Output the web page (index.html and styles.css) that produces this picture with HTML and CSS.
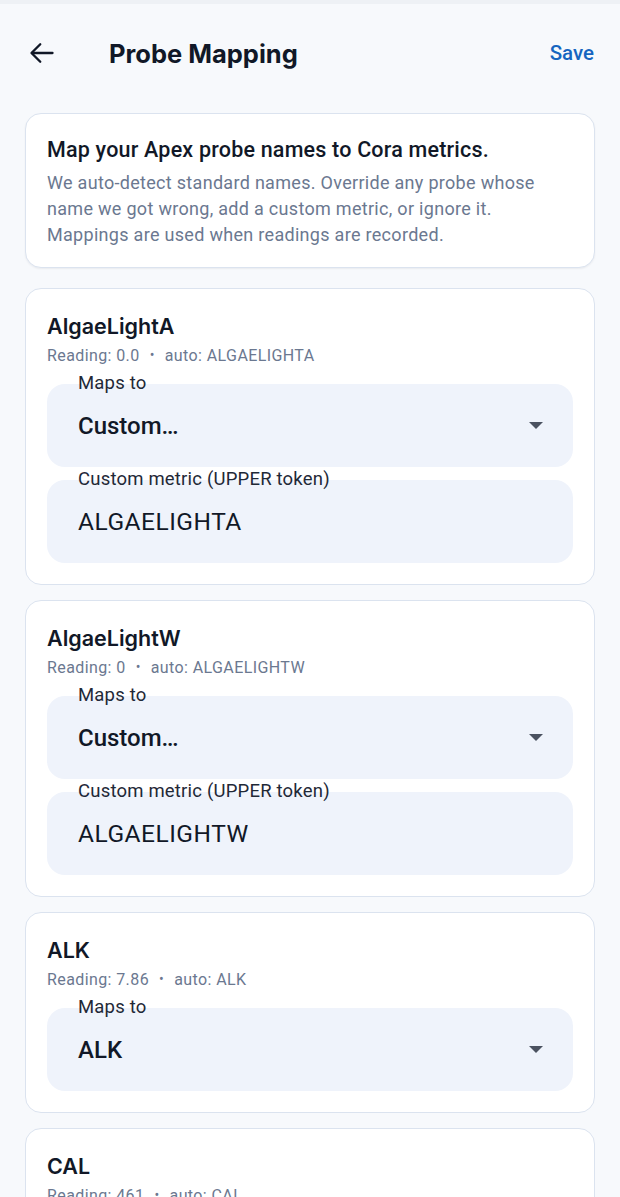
FILE: index.html
```html
<!DOCTYPE html>
<html lang="en">
<head>
<meta charset="utf-8">
<title>Probe Mapping</title>
<link rel="stylesheet" href="styles.css">
</head>
<body>
<div class="status"></div>
<header class="topbar">
  <button class="back" aria-label="Back">
    <svg width="28" height="28" viewBox="0 0 24 24" fill="none" stroke="#111827" stroke-width="2" stroke-linecap="round" stroke-linejoin="round"><path d="M21 12H3.5"/><path d="M10.5 4.5L3 12l7.5 7.5"/></svg>
  </button>
  <h1 class="title">Probe Mapping</h1>
  <span class="save">Save</span>
</header>
<main class="list">
  <section class="card intro">
    <h2 class="intro-title">Map your Apex probe names to Cora metrics.</h2>
    <p class="intro-text">We auto-detect standard names. Override any probe whose name we got wrong, add a custom metric, or ignore it. Mappings are used when readings are recorded.</p>
  </section>

  <section class="card probe">
    <h3 class="probe-name">AlgaeLightA</h3>
    <div class="meta">Reading: 0.0<span class="dot">•</span>auto: ALGAELIGHTA</div>
    <div class="field select">
      <span class="label">Maps to</span>
      <span class="value strong">Custom…</span>
      <span class="caret"></span>
    </div>
    <div class="field">
      <span class="label">Custom metric (UPPER token)</span>
      <span class="value">ALGAELIGHTA</span>
    </div>
  </section>

  <section class="card probe">
    <h3 class="probe-name">AlgaeLightW</h3>
    <div class="meta">Reading: 0<span class="dot">•</span>auto: ALGAELIGHTW</div>
    <div class="field select">
      <span class="label">Maps to</span>
      <span class="value strong">Custom…</span>
      <span class="caret"></span>
    </div>
    <div class="field">
      <span class="label">Custom metric (UPPER token)</span>
      <span class="value">ALGAELIGHTW</span>
    </div>
  </section>

  <section class="card probe">
    <h3 class="probe-name">ALK</h3>
    <div class="meta">Reading: 7.86<span class="dot">•</span>auto: ALK</div>
    <div class="field select">
      <span class="label">Maps to</span>
      <span class="value strong">ALK</span>
      <span class="caret"></span>
    </div>
  </section>

  <section class="card probe">
    <h3 class="probe-name">CAL</h3>
    <div class="meta">Reading: 461<span class="dot">•</span>auto: CAL</div>
    <div class="field select">
      <span class="label">Maps to</span>
      <span class="value strong">CAL</span>
      <span class="caret"></span>
    </div>
  </section>
</main>
</body>
</html>
```
FILE: styles.css
```css
* { box-sizing: border-box; }
html, body { margin: 0; padding: 0; }
body {
  background: #f7f9fc;
  font-family: Roboto, "Liberation Sans", sans-serif;
  color: #111827;
  width: 620px;
  height: 1197px;
  overflow: hidden;
}
.status { height: 4px; background: #eef1f5; }
.topbar {
  height: 102px;
  display: flex;
  align-items: center;
  padding: 0 26px 4px 28px;
}
.back {
  background: none; border: 0; padding: 0;
  width: 28px; height: 28px;
  display: flex; align-items: center; justify-content: center;
}
.title {
  margin: 0 0 0 53px;
  font-family: Inter, Roboto, sans-serif;
  font-size: 25.5px;
  font-weight: 700;
  color: #111827;
  flex: 1;
  letter-spacing: 0;
}
.save {
  color: #1565c0;
  font-size: 20.5px;
  font-weight: 500;
}
.list {
  padding: 7px 25px 0;
  display: flex;
  flex-direction: column;
  gap: 15px;
}
.card {
  background: #fff;
  border: 1px solid #dbe3ef;
  border-radius: 16px;
}
.intro {
  padding: 22px 21px 20px;
  box-shadow: 0 1px 2px rgba(15, 23, 42, 0.06);
  height: 155px;
  margin-bottom: 5px;
  flex: none;
}
.intro-title {
  margin: 0;
  font-size: 21.5px;
  font-weight: 500;
  line-height: 28px;
  letter-spacing: 0.2px;
  color: #111827;
}
.intro-text {
  margin: 6px 0 0;
  font-size: 18px;
  line-height: 25.8px;
  letter-spacing: 0.3px;
  color: #6b7890;
}
.probe {
  padding: 24px 21px 21px;
  display: flex;
  flex-direction: column;
  flex: none;
}
.probe-name {
  margin: 0;
  font-family: Inter, Roboto, sans-serif;
  font-size: 21.5px;
  font-weight: 600;
  line-height: 26px;
  height: 26px;
}
.meta {
  margin-top: 7px;
  height: 20px;
  font-size: 16px;
  line-height: 20px;
  letter-spacing: 0.4px;
  color: #6b7890;
  white-space: nowrap;
}
.dot { margin: 0 10px; font-size: 14px; line-height: 0; vertical-align: 1px; }
.field {
  position: relative;
  margin-top: 13px;
  height: 83px;
  flex: none;
  background: #eff3fb;
  border-radius: 18px;
  display: flex;
  align-items: center;
  padding: 0 30px 0 31px;
}
.select { margin-top: 18px; }
.label {
  position: absolute;
  left: 31px;
  top: -12px;
  font-size: 18.5px;
  line-height: 22px;
  letter-spacing: 0.2px;
  color: #1f2937;
}
.value {
  flex: 1;
  font-size: 24.5px;
  letter-spacing: 0.5px;
  color: #111827;
}
.value.strong { font-weight: 500; font-size: 24px; letter-spacing: 0; }
.caret {
  width: 0; height: 0;
  border-left: 7px solid transparent;
  border-right: 7px solid transparent;
  border-top: 7px solid #4b5260;
}
```
